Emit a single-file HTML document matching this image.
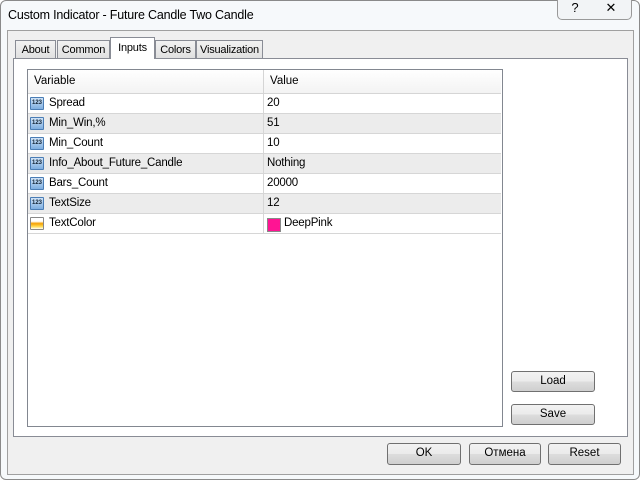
<html><head><style>
body{margin:0;width:640px;height:480px;overflow:hidden;background:#fff;font-family:"Liberation Sans",sans-serif;font-size:11.5px;color:#000;position:relative}
.a{position:absolute;white-space:nowrap}
.btn{position:absolute;border:1px solid #707070;border-radius:3px;background:linear-gradient(#f2f2f2 0,#ebebeb 50%,#dddddd 51%,#cfcfcf 100%);text-align:center;line-height:19px;font-size:11.5px;box-sizing:border-box}
.tab{position:absolute;top:40px;height:18px;border:1px solid #898c95;border-bottom:none;background:linear-gradient(#f2f2f2,#e0e0e0);line-height:18px;text-align:center;box-sizing:border-box;white-space:nowrap;font-size:11px;letter-spacing:-0.2px}
.row{position:absolute;left:28px;width:473px;height:20px;border-bottom:1px solid #d6d6d6;box-sizing:border-box;line-height:19px;white-space:nowrap;letter-spacing:-0.2px}
.ic{position:absolute;left:2px;top:3px;width:14px;height:13px;background:linear-gradient(#cfe3f7,#7eaee0);border:1px solid #4a7db5;border-radius:1px;box-sizing:border-box;font-size:6px;line-height:11px;color:#123;text-align:center;font-weight:bold;letter-spacing:0}
.n{position:absolute;left:21px}
.v{position:absolute;left:239px}
</style></head><body>
<div class="a" style="left:0;top:0;width:638px;height:478px;border:1px solid #8a8a8a;border-radius:6px;background:#f6f9fb"></div>
<div class="a" style="left:8px;top:8px;font-size:12.5px;letter-spacing:-0.2px">Custom Indicator - Future Candle Two Candle</div>
<div class="a" style="left:557px;top:0;width:34px;height:19px;border:1px solid #999;border-top:none;border-radius:0 0 0 5px;background:#f2f4f6;text-align:center;font-size:13px">?</div>
<div class="a" style="left:591px;top:0;width:40px;height:19px;border:1px solid #999;border-top:none;border-left:none;border-radius:0 0 5px 0;background:#f2f4f6;text-align:center;font-size:13px">✕</div>
<div class="a" style="left:7px;top:30px;width:625px;height:443px;border:1px solid #a0a0a0;background:#f0f0f0"></div>
<div class="a" style="left:13px;top:58px;width:613px;height:377px;border:1px solid #898c95;background:#fff"></div>
<div class="tab" style="left:15px;width:41px">About</div>
<div class="tab" style="left:57px;width:53px">Common</div>
<div class="tab" style="left:110px;top:37px;height:22px;width:45px;background:#fff;line-height:20px">Inputs</div>
<div class="tab" style="left:155px;width:41px">Colors</div>
<div class="tab" style="left:196px;width:67px">Visualization</div>
<div class="a" style="left:27px;top:69px;width:474px;height:356px;border:1px solid #828790;background:#fff"></div>
<div class="a" style="left:28px;top:70px;width:473px;height:23px;background:linear-gradient(#fff,#f3f3f3);border-bottom:1px solid #d5d5d5"></div>
<div class="a" style="left:34px;top:75px">Variable</div>
<div class="a" style="left:263px;top:70px;width:1px;height:23px;background:#d5d5d5"></div>
<div class="a" style="left:270px;top:75px">Value</div>
<div class="row" style="top:94px;background:#fff"><div class="ic">123</div><span class="n">Spread</span><span class="v">20</span></div>
<div class="row" style="top:114px;background:#ececec"><div class="ic">123</div><span class="n">Min_Win,%</span><span class="v">51</span></div>
<div class="row" style="top:134px;background:#fff"><div class="ic">123</div><span class="n">Min_Count</span><span class="v">10</span></div>
<div class="row" style="top:154px;background:#ececec"><div class="ic">123</div><span class="n">Info_About_Future_Candle</span><span class="v">Nothing</span></div>
<div class="row" style="top:174px;background:#fff"><div class="ic">123</div><span class="n">Bars_Count</span><span class="v">20000</span></div>
<div class="row" style="top:194px;background:#ececec"><div class="ic">123</div><span class="n">TextSize</span><span class="v">12</span></div>
<div class="row" style="top:214px;background:#fff"><div class="ic" style="background:linear-gradient(#fff 30%,#f5a000 50%,#ffe060 80%,#fff);border-color:#888"></div><span class="n">TextColor</span><span class="a" style="left:239px;top:4px;width:12px;height:12px;background:#ff1493;border:1px solid #888"></span><span class="a" style="left:256px">DeepPink</span></div>
<div class="a" style="left:263px;top:94px;width:1px;height:140px;background:#d6d6d6"></div>
<div class="btn" style="left:511px;top:371px;width:84px;height:21px">Load</div>
<div class="btn" style="left:511px;top:404px;width:84px;height:21px">Save</div>
<div class="btn" style="left:387px;top:443px;width:74px;height:22px">OK</div>
<div class="btn" style="left:469px;top:443px;width:72px;height:22px">Отмена</div>
<div class="btn" style="left:548px;top:443px;width:73px;height:22px">Reset</div>
</body></html>
